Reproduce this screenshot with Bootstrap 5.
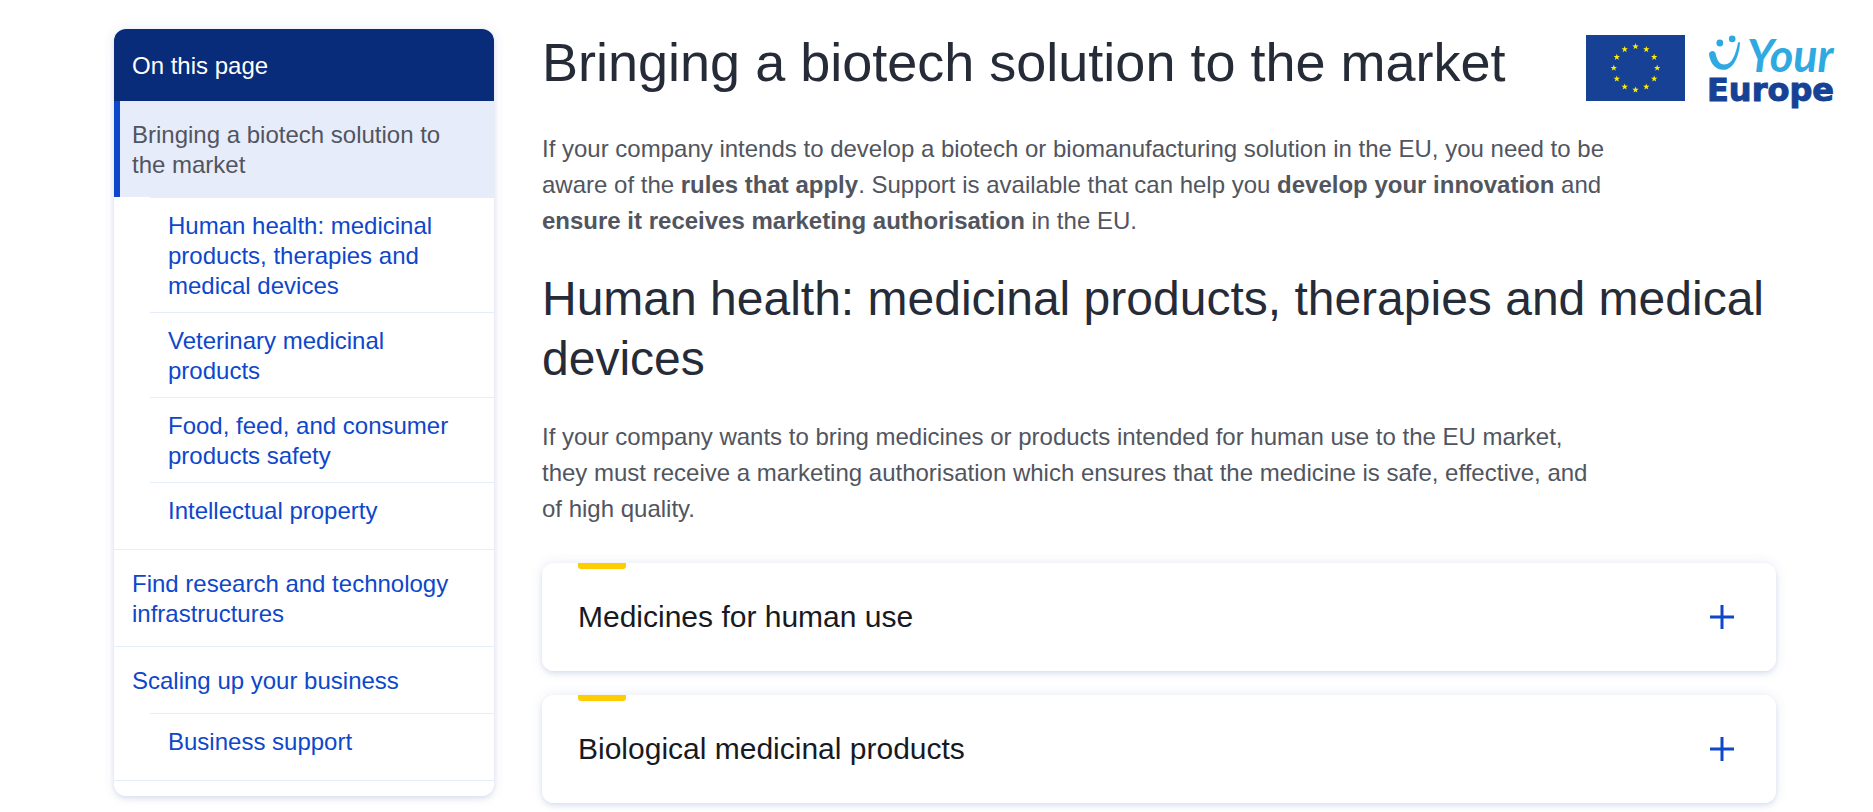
<!DOCTYPE html>
<html lang="en">
<head>
<meta charset="utf-8">
<meta name="viewport" content="width=device-width, initial-scale=1">
<title>Bringing a biotech solution to the market - Your Europe</title>
<link href="https://cdn.jsdelivr.net/npm/bootstrap@5.3.0/dist/css/bootstrap.min.css" rel="stylesheet">
<style>
  :root {
    --eu-blue: #0e47cb;
    --eu-line: #e7ecfa;
    --eu-grey: #515560;
    --eu-shadow: 0 2px 5px rgba(9,57,142,.08), 0 0 14px rgba(9,57,142,.09), 0 4px 5px rgba(9,57,142,.03);
  }
  body { font-family: "Liberation Sans", Arial, sans-serif; font-size: 24px; line-height: 36px; color: var(--eu-grey); }
  .page-shell { gap: 48px; padding: 29px 38px 9px 114px; }

  .page-nav { flex: 0 0 380px; line-height: 30px; border-radius: 12px; box-shadow: var(--eu-shadow); overflow: hidden; padding-bottom: 15px; }
  .page-nav-title { background: #082b7a; font-size: 24px; line-height: 36px; padding: 19px 18px 17px; }
  .page-nav a { display: block; padding: 19px 18px 17px; color: var(--eu-blue); text-decoration: none; }
  .page-nav a:hover { text-decoration: underline; }
  .page-nav a.active { background: var(--eu-line); box-shadow: inset 6px 0 var(--eu-blue); color: var(--eu-grey); }
  .nav-top > li { border-bottom: 1px solid var(--eu-line); }
  .nav-sub { margin-left: 36px; padding-bottom: 12px; }
  .nav-sub > li { border-top: 1px solid var(--eu-line); }
  .page-nav .nav-sub a { padding: 13px 18px 11px; }

  .page-main { min-width: 0; }
  .page-body { padding: 22px 59px 0 0; }
  h1, h2 { color: #262b38; font-weight: 400; }
  h1 { font-size: 54px; line-height: 66px; }
  h2 { font-size: 48px; line-height: 60px; margin: 30px 0; }
  .copy { max-width: 80ch; }
  .logos { gap: 24px; padding-top: 6px; }
  .logos svg { overflow: visible; }

  .topics { margin-top: 36px; --bs-accordion-border-radius: 12px; --bs-accordion-inner-border-radius: 12px; }
  .topics .accordion-item { border: 0; border-radius: 12px; box-shadow: var(--eu-shadow); }
  .topics .accordion-item .accordion-button { padding: 36px; font-size: 30px; line-height: 36px; color: #171a22; background: #fff; border-radius: 12px; box-shadow: none; }
  .topics .accordion-button:focus-visible { outline: 3px solid var(--eu-blue); }
  .topics .accordion-button::after { display: none; }
  .topics .accordion-button::before { content: ""; position: absolute; top: 0; left: 36px; width: 48px; height: 6px; background: #fc0; border-radius: 0 0 3px 3px; }
  @media (max-width: 991px) {
    .page-shell { flex-direction: column; padding: 24px; }
    .page-nav { flex-basis: auto; width: 100%; }
    .page-heading { flex-wrap: wrap; }
    .page-body { padding-right: 0; }
  }
</style>
</head>
<body>
<div class="page-shell d-flex align-items-start">

  <nav class="page-nav bg-white" aria-label="On this page">
    <div class="page-nav-title text-white">On this page</div>
    <ul class="nav-top list-unstyled mb-0">
      <li>
        <a class="active" href="#top" aria-current="page">Bringing a biotech solution to the market</a>
        <ul class="nav-sub list-unstyled">
          <li><a href="#human-health">Human health: medicinal products, therapies and medical devices</a></li>
          <li><a href="#veterinary">Veterinary medicinal products</a></li>
          <li><a href="#food">Food, feed, and consumer products safety</a></li>
          <li><a href="#ip">Intellectual property</a></li>
        </ul>
      </li>
      <li><a href="#research">Find research and technology infrastructures</a></li>
      <li>
        <a href="#scaling">Scaling up your business</a>
        <ul class="nav-sub list-unstyled">
          <li><a href="#support">Business support</a></li>
        </ul>
      </li>
    </ul>
  </nav>

  <main class="page-main flex-grow-1" id="top">
    <header class="page-heading d-flex justify-content-between align-items-start">
      <h1 class="mb-0">Bringing a biotech solution to the market</h1>
      <div class="logos d-flex align-items-start flex-shrink-0">
        <svg width="99" height="66" viewBox="0 0 99 66" role="img" aria-label="European Union flag">
          <defs>
            <path id="star" fill="#ffed00" d="M0-3.4 .8-1.1 3.2-1.1 1.3.4 2 2.8 0 1.35-2 2.8-1.3.4-3.2-1.1-.8-1.1z"/>
          </defs>
          <rect width="99" height="66" fill="#164194"/>
          <use href="#star" x="49.5" y="11.5"/><use href="#star" x="60.3" y="14.4"/><use href="#star" x="68.2" y="22.2"/>
          <use href="#star" x="71.2" y="33"/><use href="#star" x="68.2" y="43.8"/><use href="#star" x="60.3" y="51.8"/>
          <use href="#star" x="49.5" y="54.8"/><use href="#star" x="38.7" y="51.8"/><use href="#star" x="30.8" y="43.8"/>
          <use href="#star" x="27.8" y="33"/><use href="#star" x="30.8" y="22.2"/><use href="#star" x="38.7" y="14.4"/>
        </svg>
        <svg width="126" height="74" viewBox="0 0 126 74" role="img" aria-label="Your Europe">
          <g fill="#2fa9e1">
            <circle cx="10.8" cy="8" r="3.4"/>
            <circle cx="23.2" cy="3.9" r="3.3"/>
            <path d="M0 19.5C0 15.5 5.8 14.6 6.6 18.6 8 25 10 29.6 15.5 29.6 23 29.6 27 19 29 7.5L31 7C30.5 20 25 34.8 14.5 34.8 5.5 34.8 1 27 0 19.5z"/>
            <text x="38" y="37" font-family="Lato, sans-serif" font-size="45" font-weight="700" font-style="italic">Your</text>
          </g>
          <text x="-2" y="66" fill="#164194" stroke="#164194" stroke-width="1" font-family="'DejaVu Sans', sans-serif" font-size="32" font-weight="700">Europe</text>
        </svg>
      </div>
    </header>

    <div class="page-body">
      <p class="copy mb-0">If your company intends to develop a biotech or biomanufacturing solution in the EU, you need to be aware of the <strong>rules that apply</strong>. Support is available that can help you <strong>develop your innovation</strong> and <strong>ensure it receives marketing authorisation</strong> in the EU.</p>
      <h2 id="human-health">Human health: medicinal products, therapies and medical devices</h2>
      <p class="copy mb-0">If your company wants to bring medicines or products intended for human use to the EU market, they must receive a marketing authorisation which ensures that the medicine is safe, effective, and of high quality.</p>

      <div class="topics accordion d-grid gap-4">
        <div class="accordion-item">
          <h3 class="accordion-header">
            <button class="accordion-button collapsed justify-content-between" type="button" aria-expanded="false">
              Medicines for human use
              <svg width="36" height="36" viewBox="0 0 36 36" aria-hidden="true"><path d="M18 6v24M6 18h24" stroke="#0e47cb" stroke-width="3"/></svg>
            </button>
          </h3>
        </div>
        <div class="accordion-item">
          <h3 class="accordion-header">
            <button class="accordion-button collapsed justify-content-between" type="button" aria-expanded="false">
              Biological medicinal products
              <svg width="36" height="36" viewBox="0 0 36 36" aria-hidden="true"><path d="M18 6v24M6 18h24" stroke="#0e47cb" stroke-width="3"/></svg>
            </button>
          </h3>
        </div>
      </div>
    </div>
  </main>
</div>
<script src="https://cdn.jsdelivr.net/npm/bootstrap@5.3.0/dist/js/bootstrap.bundle.min.js"></script>
</body>
</html>
